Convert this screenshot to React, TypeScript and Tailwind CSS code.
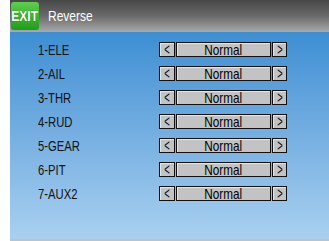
const channels = ['1-ELE', '2-AIL', '3-THR', '4-RUD', '5-GEAR', '6-PIT', '7-AUX2'];

function Box({ children, className }: { children: React.ReactNode; className: string }) {
  return (
    <div className={`flex h-[15px] items-center justify-center border border-[#111] bg-[#c3c3c3] text-[15px] leading-[13px] text-black shadow-[inset_1px_1px_0_#e6e6e6] ${className}`}>
      {children}
    </div>
  );
}

export default function App() {
  return (
    <div className="flex h-[241px] w-[329px] bg-white" style={{ fontFamily: '"Liberation Sans", Arial, sans-serif' }}>
      <div className="w-[10px] shrink-0 bg-white" />
      <div className="flex flex-1 flex-col">
        <div className="flex h-[32px] items-center bg-gradient-to-b from-[#474747] via-[#6a6a6a] to-[#a9aba9] pl-[1px]">
          <div className="flex h-[28px] w-[28px] items-center justify-center rounded-[3px] bg-gradient-to-b from-[#5ccf4c] to-[#1e9c1a]">
            <span className="inline-block scale-x-[0.8] text-[15px] font-bold text-white [text-shadow:0_0_1px_#0a5a0a]">EXIT</span>
          </div>
          <span className="ml-[9px] inline-block origin-left scale-x-[0.8] text-[15px] text-white">Reverse</span>
        </div>
        <div className="flex flex-1 flex-col bg-gradient-to-b from-[#3c8ed3] to-[#aad0ef] pl-[28px] pt-[10px]">
          {channels.map((c) => (
            <div key={c} className="flex h-[24px] items-start">
              <div className="flex h-[15px] w-[121px] items-center">
                <span className="inline-block origin-left scale-x-[0.75] text-[15px] leading-none text-[#111]">{c}</span>
              </div>
              <div className="flex gap-[1px]">
                <Box className="w-[16px]"><span className="inline-block scale-x-[0.55] text-[17px] font-light leading-[13px]">&lt;</span></Box>
                <Box className="w-[95px]"><span className="inline-block scale-x-[0.78]">Normal</span></Box>
                <Box className="w-[15px]"><span className="inline-block scale-x-[0.55] text-[17px] font-light leading-[13px]">&gt;</span></Box>
              </div>
            </div>
          ))}
        </div>
        <div className="h-[2px] bg-[#c2c2c2]" />
      </div>
    </div>
  );
}
